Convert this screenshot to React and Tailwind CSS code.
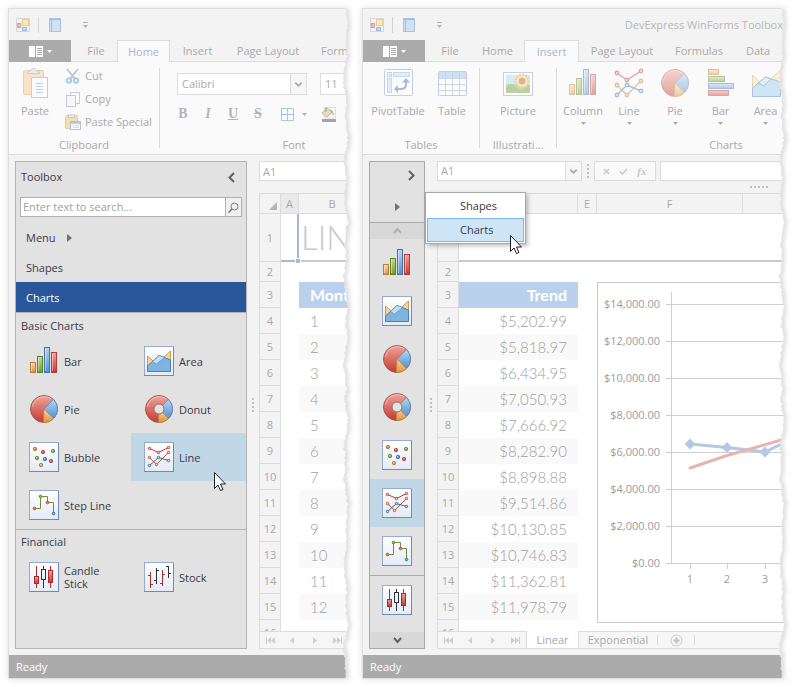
import { ChevronDown } from 'lucide-react';

const BASIC_CHARTS = [
  { name: 'Bar', icon: BarIcon },
  { name: 'Area', icon: AreaIcon },
  { name: 'Pie', icon: PieIcon },
  { name: 'Donut', icon: DonutIcon },
  { name: 'Bubble', icon: BubbleIcon },
  { name: 'Line', icon: LineIcon, hot: true },
  { name: 'Step Line', icon: StepIcon },
];

const FINANCIAL_CHARTS = [
  { name: 'Candle Stick', icon: CandleIcon },
  { name: 'Stock', icon: StockIcon },
];

const TREND = [
  '$5,202.99', '$5,818.97', '$6,434.95', '$7,050.93', '$7,666.92', '$8,282.90',
  '$8,898.88', '$9,514.86', '$10,130.85', '$10,746.83', '$11,362.81', '$11,978.79',
];

const TABS = [
  { name: 'File', width: 'w-[42px]' },
  { name: 'Home', width: 'w-[53px]' },
  { name: 'Insert', width: 'w-[55px]' },
  { name: 'Page Layout', width: 'w-[86px]' },
  { name: 'Formulas', width: 'w-[68px]' },
  { name: 'Data', width: 'w-[50px]' },
];

/* ---------- icons ---------- */

function Gradients() {
  const list = [
    ['gRed', '#f0a49c', '#c43a2e'],
    ['gBlue', '#b4d8f4', '#4d92d0'],
    ['gOrange', '#fbd9a8', '#e0903a'],
    ['gGreen', '#c6dc8c', '#6f9c2a'],
    ['gFrame', '#ffffff', '#e4ebf6'],
  ];
  return (
    <svg className="absolute h-0 w-0" aria-hidden="true">
      <defs>
        {list.map(([id, a, b]) => (
          <linearGradient key={id} id={id} x1="0" y1="0" x2="0" y2="1">
            <stop offset="0" stopColor={a} />
            <stop offset="1" stopColor={b} />
          </linearGradient>
        ))}
      </defs>
    </svg>
  );
}

function Icon({ children, frame }) {
  return (
    <svg width="30" height="30" viewBox="0 0 30 30" fill="none" className="shrink-0" aria-hidden="true">
      {frame && (
        <>
          <rect x="0.5" y="0.5" width="29" height="29" fill="url(#gFrame)" stroke="#98a9d2" />
          <path d="M0 29.5H30M29.5 1V30" stroke="#7387b8" />
        </>
      )}
      {children}
    </svg>
  );
}

function Bars() {
  return (
    <>
      <rect x="1.5" y="16.5" width="5" height="10" fill="url(#gOrange)" stroke="#c07a34" />
      <rect x="8.5" y="10.5" width="5" height="16" fill="url(#gGreen)" stroke="#5d8426" />
      <rect x="15.5" y="1.5" width="5" height="25" fill="url(#gBlue)" stroke="#4470b0" />
      <rect x="22.5" y="6.5" width="5" height="20" fill="url(#gRed)" stroke="#b83a3a" />
      <path d="M2.5 17.5V25M9.5 11.5V25M16.5 2.5V25M23.5 7.5V25" stroke="#fff" strokeOpacity="0.45" />
    </>
  );
}

function BarIcon() {
  return <Icon><Bars /></Icon>;
}

function AreaShape() {
  return (
    <>
      <path d="M3.5 10L12.5 18L26.5 5V25.5H3.5Z" fill="#f8d29a" stroke="#cf9a52" />
      <path d="M3.5 20L15 9.5L26.5 14V25.5H3.5Z" fill="#7fb4e0" stroke="#4b7fbd" />
      <path d="M8.5 15.5L15 9.5L20.5 11.5L12.5 18Z" fill="#c3dff5" stroke="#5a8fca" strokeWidth="0.7" />
    </>
  );
}

function AreaIcon() {
  return <Icon frame><AreaShape /></Icon>;
}

function PieShape() {
  return (
    <>
      <circle cx="15" cy="15" r="13.5" fill="url(#gRed)" stroke="#a8564e" />
      <path d="M15 15L24.5 5.4A13.5 13.5 0 0 1 24.5 24.6Z" fill="url(#gBlue)" stroke="#5a86b8" strokeWidth="0.8" />
      <path d="M15 15L24.5 24.6A13.5 13.5 0 0 1 14.5 28.5Z" fill="url(#gOrange)" stroke="#b98a4a" strokeWidth="0.8" />
      <path d="M3.5 13A12 12 0 0 1 22.5 5" stroke="#fff" strokeOpacity="0.4" />
    </>
  );
}

function PieIcon() {
  return <Icon><PieShape /></Icon>;
}

function DonutIcon() {
  return (
    <Icon>
      <PieShape />
      <circle cx="15" cy="15" r="5" fill="#e2e2e2" stroke="#94706e" />
    </Icon>
  );
}

function BubbleIcon() {
  const dots = [
    [6, 7, '#d9914c', '#a8602a'], [14, 10, '#d9605a', '#a83232'], [24, 9, '#8fb455', '#54782a'],
    [8, 16, '#8fb455', '#54782a'], [16, 17, '#5c98dc', '#2f60a4'], [22, 19, '#d9605a', '#a83232'],
    [12, 23, '#e6a45c', '#b06a2a'],
  ];
  return (
    <Icon frame>
      {dots.map(([x, y, fill, stroke]) => (
        <g key={`${x}-${y}`}>
          <circle cx={x} cy={y} r="1.7" fill={fill} stroke={stroke} strokeWidth="0.8" />
          <circle cx={x - 0.5} cy={y - 0.5} r="0.6" fill="#fff" fillOpacity="0.7" />
        </g>
      ))}
    </Icon>
  );
}

function Series({ points, color, r = 1.2, width = 1 }) {
  return (
    <g stroke={color} strokeWidth={width}>
      <polyline points={points.map((p) => p.join(',')).join(' ')} />
      {points.map(([x, y]) => <circle key={x} cx={x} cy={y} r={r} fill="#f4d9d4" />)}
    </g>
  );
}

function LineIcon() {
  return (
    <Icon frame>
      <Series points={[[5.5, 6.5], [14.5, 10.5], [24.5, 5.5]]} color="#c4393b" />
      <Series points={[[5.5, 15.5], [12.5, 22.5], [24.5, 10.5]]} color="#b5562f" />
      <Series points={[[5.5, 23.5], [14.5, 15.5], [24.5, 18.5]]} color="#3467b8" />
    </Icon>
  );
}

function StepIcon() {
  return (
    <Icon frame>
      <path d="M5.5 18.5H11.5V6.5H18.5V12.5H24.5V23.5" stroke="#6d9138" />
      <circle cx="5.5" cy="18.5" r="1.3" fill="#e08a6a" stroke="#b5502f" />
      <circle cx="11.5" cy="6.5" r="1.3" fill="#a6c470" stroke="#5b8029" />
      <circle cx="18.5" cy="12.5" r="1.3" fill="#f08a80" stroke="#c4393b" />
      <circle cx="24.5" cy="23.5" r="1.3" fill="#8ab4e6" stroke="#3467b8" />
    </Icon>
  );
}

function CandleIcon() {
  return (
    <Icon frame>
      <path d="M7.5 4V26M21.5 4V26" stroke="#b3282d" />
      <path d="M14.5 4V26" stroke="#2c3140" />
      <rect x="5.5" y="14.5" width="4" height="7" fill="url(#gRed)" stroke="#b3282d" />
      <rect x="12.5" y="7.5" width="4" height="10" fill="#eef2f9" stroke="#2c3140" />
      <rect x="19.5" y="8.5" width="4" height="12" fill="url(#gRed)" stroke="#b3282d" />
    </Icon>
  );
}

function StockIcon() {
  return (
    <Icon frame>
      <path d="M6.5 10V26M4 13.5H6.5M6.5 22.5H9M18.5 8V24M16 21.5H18.5M18.5 12.5H21" stroke="#b3282d" />
      <path d="M12.5 6V22M10 18.5H12.5M12.5 8.5H15M24.5 4V16M22 4.5H24.5M24.5 11.5H27" stroke="#2c3140" />
    </Icon>
  );
}

function LineLargeIcon() {
  return (
    <Icon>
      <Series points={[[3, 5], [13, 12], [27, 3]]} color="#c4393b" r={1.7} width={1.4} />
      <Series points={[[3, 17], [13, 27], [27, 13]]} color="#cc7a30" r={1.7} width={1.4} />
      <Series points={[[3, 27], [13, 17], [27, 23]]} color="#3a78c8" r={1.7} width={1.4} />
    </Icon>
  );
}

function HBarIcon() {
  return (
    <Icon>
      <rect x="2.5" y="1.5" width="10" height="5" fill="url(#gOrange)" stroke="#c07a34" />
      <rect x="2.5" y="8.5" width="16" height="5" fill="url(#gGreen)" stroke="#5d8426" />
      <rect x="2.5" y="15.5" width="25" height="5" fill="url(#gBlue)" stroke="#4470b0" />
      <rect x="2.5" y="22.5" width="20" height="5" fill="url(#gRed)" stroke="#b83a3a" />
    </Icon>
  );
}

function AreaLargeIcon() {
  return (
    <Icon>
      <path d="M1.5 7L12.5 18L29.5 2V28.5H1.5Z" fill="#fae0a8" stroke="#d9a85a" />
      <path d="M1.5 20L14.5 9L29.5 14V28.5H1.5Z" fill="#9accf0" stroke="#4b7fbd" />
      <path d="M7.5 15L14.5 9L20 11L12.5 18Z" fill="#c9e3f7" stroke="#4b7fbd" />
    </Icon>
  );
}

function PivotIcon() {
  return (
    <Icon>
      <rect x="1.5" y="1.5" width="28" height="26" rx="1" fill="#fff" stroke="#7f96cc" />
      <rect x="4.5" y="4.5" width="4" height="4" fill="#bfe0f6" stroke="#7fb4dc" />
      <rect x="10.5" y="4.5" width="16" height="4" fill="#bfe0f6" stroke="#7fb4dc" />
      <rect x="4.5" y="10.5" width="4" height="14" fill="#bfe0f6" stroke="#7fb4dc" />
      <path d="M13 21H18Q23 21 23 16V14" stroke="#4470b8" strokeWidth="2" />
      <path d="M11 21L15 17V25ZM23 10L27 14.5H19Z" fill="#4470b8" />
    </Icon>
  );
}

function TableIcon() {
  return (
    <Icon>
      <rect x="1.5" y="3.5" width="28" height="24" rx="1" fill="#fff" stroke="#7f96cc" />
      <rect x="2" y="4" width="27" height="6" fill="#8fc4ea" />
      <path d="M2 10.5H29M2 16.5H29M2 22.5H29M8.5 4V27M15.5 4V27M22.5 4V27" stroke="#9aa8d4" />
    </Icon>
  );
}

function PictureIcon() {
  return (
    <Icon>
      <rect x="0.5" y="4.5" width="29" height="23" fill="#fff" stroke="#8c9ccc" />
      <rect x="3" y="7" width="24" height="9" fill="#a8dcf4" />
      <rect x="3" y="16" width="24" height="9" fill="#90b848" />
      <path d="M3 19Q8 13 13 19T22 20L27 17V25H3Z" fill="#6f9c3a" />
      <circle cx="19" cy="13" r="6.5" fill="#f6cf6a" stroke="#dd9a3c" strokeWidth="2" strokeDasharray="2 1" />
      <circle cx="19" cy="13" r="3.2" fill="#a8602c" />
    </Icon>
  );
}

function PasteIcon() {
  return (
    <Icon>
      <rect x="3.5" y="2.5" width="20" height="24" rx="1.5" fill="#f6c98c" stroke="#dba060" />
      <path d="M7.5 5.5Q7 3.5 10 3Q11 0.5 13.5 0.5T17 3Q20 3.5 19.5 5.5Z" fill="#d6dcf0" stroke="#7f8fc4" />
      <rect x="11.5" y="9.5" width="16" height="20" fill="#f8faff" stroke="#7f96d8" />
      <path d="M16 15.5H23M16 18.5H23M16 21.5H23M16 24.5H23" stroke="#7f96d8" />
    </Icon>
  );
}

function CutIcon() {
  return (
    <svg width="16" height="16" viewBox="0 0 16 16" fill="none" aria-hidden="true">
      <path d="M2 1L10 11M13 1L5 11" stroke="#8a94b4" strokeWidth="2" />
      <circle cx="4" cy="12.5" r="2.3" fill="#d6ebfa" stroke="#4f94d8" strokeWidth="1.6" />
      <circle cx="11" cy="12.5" r="2.3" fill="#d6ebfa" stroke="#4f94d8" strokeWidth="1.6" />
    </svg>
  );
}

function CopyIcon() {
  return (
    <svg width="16" height="16" viewBox="0 0 16 16" fill="none" aria-hidden="true">
      <rect x="5.5" y="1.5" width="9" height="11" fill="#fff" stroke="#8a9ad4" />
      <rect x="1.5" y="4.5" width="9" height="11" fill="#f4f8ff" stroke="#8a9ad4" />
    </svg>
  );
}

function PasteSpecialIcon() {
  return (
    <svg width="16" height="16" viewBox="0 0 16 16" fill="none" aria-hidden="true">
      <rect x="0.5" y="1.5" width="12" height="13" rx="1" fill="#f6c65c" stroke="#d89a3c" />
      <path d="M3.5 3.5V1H9.5V3.5Z" fill="#eee" stroke="#8c8c9c" />
      <rect x="5.5" y="7.5" width="10" height="8" fill="#fff" stroke="#5c8cd0" />
      <path d="M6 9H15" stroke="#5ca4e4" strokeWidth="2" />
      <path d="M8 11.5H14M8 13.5H14" stroke="#b4bcd8" />
    </svg>
  );
}

function Chevron({ d, className }) {
  return (
    <svg width="9" height="11" viewBox="0 0 9 11" fill="none" className={className} aria-hidden="true">
      <path d={d} stroke="currentColor" strokeWidth="2" />
    </svg>
  );
}

function Caret({ className = '' }) {
  return (
    <svg width="5" height="3" viewBox="0 0 5 3" className={className} aria-hidden="true">
      <path d="M0 0H5L2.5 3Z" fill="currentColor" />
    </svg>
  );
}

function RightCaret() {
  return (
    <svg width="5" height="8" viewBox="0 0 5 8" aria-hidden="true">
      <path d="M0 0L5 4L0 8Z" fill="#707070" />
    </svg>
  );
}

function Cursor({ className }) {
  return (
    <svg width="13" height="20" viewBox="0 0 13 20" className={className} aria-hidden="true">
      <path d="M0.5 0.5V16.5L4 13L6.5 18.5L9 17.5L6.5 12H11.5Z" fill="#fff" stroke="#1c2030" />
    </svg>
  );
}

/* ---------- window chrome ---------- */

const TORN = Array.from({ length: 337 }, (_, i) => {
  const noise = Math.abs(Math.sin(i * 127.1) * 43758.5) % 1;
  const x = 4 + Math.sin(i * 0.13) * 1.2 + Math.sin(i * 0.31) * 0.9 + (noise - 0.5) * 2.4;
  return `${x.toFixed(1)} ${i * 2}`;
}).join('L');

function TornEdge({ id }) {
  return (
    <svg
      className="pointer-events-none absolute inset-y-0 -right-[7px] z-20 h-full w-[15px]"
      viewBox="0 0 15 671"
      preserveAspectRatio="none"
      fill="none"
      aria-hidden="true"
    >
      <defs>
        <clipPath id={id}><path d={`M${TORN}L15 672V0Z`} /></clipPath>
        <filter id={`${id}-soft`} x="-100%" width="300%"><feGaussianBlur stdDeviation="2" /></filter>
      </defs>
      <g clipPath={`url(#${id})`}>
        <rect width="15" height="671" fill="#fff" />
        <path d={`M${TORN}`} stroke="#000" strokeOpacity="0.14" strokeWidth="5" filter={`url(#${id}-soft)`} />
      </g>
      <path d={`M${TORN}`} stroke="#e4e4e4" />
    </svg>
  );
}

function TitleBar({ title }) {
  return (
    <header className="flex h-[31px] items-center bg-[#f3f3f3] pl-[7px]">
      <svg width="14" height="14" viewBox="0 0 14 14" fill="none" className="shrink-0 opacity-50" aria-hidden="true">
        <path d="M0.5 0.5H13.5V13.5H0.5Z" stroke="#bbb" />
        <rect x="6.5" y="1.5" width="6" height="6" fill="#fbe08a" stroke="#d8a83c" />
        <rect x="1.5" y="5.5" width="3" height="4" fill="#f08a78" stroke="#c84c3c" />
        <rect x="6.5" y="9.5" width="4" height="3" fill="#8cc0f0" stroke="#4c8cd0" />
      </svg>
      <span className="ml-2 h-4 w-px bg-[#d4d4d4]" />
      <svg width="12" height="14" viewBox="0 0 12 14" fill="none" className="ml-[10px] shrink-0 opacity-50" aria-hidden="true">
        <rect x="0.5" y="0.5" width="11" height="13" fill="#a8d4f4" stroke="#6c94c8" />
        <path d="M2.5 0V14M1 1.5H11" stroke="#5c84b8" />
      </svg>
      <svg width="5" height="6" viewBox="0 0 5 6" className="ml-[22px] shrink-0 text-[#b4b4b4]" aria-hidden="true">
        <path d="M0 0H5V1H0ZM0 3H5L2.5 6Z" fill="currentColor" />
      </svg>
      <h1 className="ml-auto whitespace-nowrap pr-[2px] text-[#b8b8b8]">{title}</h1>
    </header>
  );
}

function TabStrip({ active, tabs }) {
  return (
    <nav className="flex h-[22px] bg-[#f3f3f3]">
      <button aria-label="Application menu" className="flex w-[62px] shrink-0 items-center justify-center gap-1 bg-[#ababab] text-white">
        <svg width="14" height="11" viewBox="0 0 14 11" aria-hidden="true">
          <path d="M0 0H6V11H0ZM7 0H14V11H7Z" fill="#fff" />
          <path d="M8 2.5H13M8 4.5H13M8 6.5H13M8 8.5H13" stroke="#ababab" />
        </svg>
        <Caret />
      </button>
      <span className="w-1 shrink-0 border-b border-[#dcdcdc]" />
      {tabs.map((tab) => (
        <button
          key={tab.name}
          className={`${tab.width} shrink-0 whitespace-nowrap border-[#dcdcdc] text-center ${
            tab.name === active ? 'border-x border-t bg-[#fafafa] text-[#a4b8d8]' : 'border-b pt-px'
          }`}
        >
          {tab.name}
        </button>
      ))}
      <span className="flex-1 border-b border-[#dcdcdc]" />
    </nav>
  );
}

function RibbonGroup({ label, width, children }) {
  return (
    <section className={`${width} flex shrink-0 flex-col`}>
      <div className="h-[69px]">{children}</div>
      <p className="text-center leading-4">{label}</p>
    </section>
  );
}

function RibbonDivider() {
  return <span className="h-20 w-px shrink-0 bg-[#dcdcdc]" />;
}

function BigButton({ icon, label, width, caret }) {
  return (
    <button className={`${width} flex flex-col items-center gap-[5px]`}>
      <span className="opacity-45">{icon}</span>
      <span className="leading-4">{label}</span>
      {caret && <Caret className="-mt-[2px] shrink-0" />}
    </button>
  );
}

function HomeRibbon() {
  return (
    <>
      <RibbonGroup label="Clipboard" width="w-[150px]">
        <div className="flex">
          <BigButton icon={<PasteIcon />} label="Paste" width="w-[52px]" />
          <div className="flex flex-col pl-1">
            {[[CutIcon, 'Cut'], [CopyIcon, 'Copy'], [PasteSpecialIcon, 'Paste Special']].map(([Glyph, label]) => (
              <button key={label} className="flex h-[23px] items-start gap-1 whitespace-nowrap leading-4">
                <span className="opacity-50"><Glyph /></span>
                {label}
              </button>
            ))}
          </div>
        </div>
      </RibbonGroup>
      <RibbonDivider />
      <RibbonGroup label="Font" width="w-[268px]">
        <div className="flex gap-[13px] pl-[17px] pt-[5px]">
          <div className="relative flex h-[22px] w-[130px] border border-[#dcdcdc] bg-white">
            <select aria-label="Font name" className="w-full appearance-none pl-1 outline-none">
              <option>Calibri</option>
            </select>
            <span className="pointer-events-none absolute inset-y-0 right-0 flex w-4 items-center justify-center border-l border-[#dcdcdc] bg-[#f6f6f6]">
              <ChevronDown size={11} strokeWidth={4} />
            </span>
          </div>
          <select aria-label="Font size" className="h-[22px] w-[60px] appearance-none border border-[#dcdcdc] bg-white pl-1 outline-none">
            <option>11</option>
          </select>
        </div>
        <div className="flex items-center pl-[17px] pt-[9px] font-['Liberation_Serif'] text-[14px] font-bold leading-5 text-[#b0b4be]">
          <button className="w-[12px]">B</button>
          <button className="ml-[13px] w-[12px] italic">I</button>
          <button className="ml-[13px] w-[12px] underline">U</button>
          <button className="ml-[13px] w-[12px] line-through">S</button>
          <button aria-label="Borders" className="ml-[17px] flex items-center gap-2">
            <svg width="13" height="13" viewBox="0 0 13 13" fill="none" aria-hidden="true">
              <path d="M0.5 0.5H12.5V12.5H0.5ZM6.5 0V13M0 6.5H13" stroke="#a4c4e8" />
            </svg>
            <Caret />
          </button>
          <button aria-label="Fill color" className="ml-[14px] flex items-center gap-2">
            <svg width="16" height="16" viewBox="0 0 16 16" fill="none" className="opacity-60" aria-hidden="true">
              <path d="M3.5 1.5H14.5V12H3.5Z" stroke="#c4cce4" />
              <path d="M1 7L6 2L11 6L6 11Z" fill="#f0c890" stroke="#b07c48" />
              <path d="M5 1V6M9 4Q12 5 12 9" stroke="#6ca04c" strokeWidth="1.5" />
              <path d="M1 13H15V16H1Z" fill="#6a6a6a" />
            </svg>
            <Caret />
          </button>
        </div>
      </RibbonGroup>
    </>
  );
}

function InsertRibbon() {
  return (
    <>
      <RibbonGroup label="Tables" width="w-[116px]">
        <div className="flex pl-[7px]">
          <BigButton icon={<PivotIcon />} label="PivotTable" width="w-[56px]" />
          <BigButton icon={<TableIcon />} label="Table" width="w-[52px]" />
        </div>
      </RibbonGroup>
      <RibbonDivider />
      <RibbonGroup label="Illustrati…" width="w-[76px]">
        <BigButton icon={<PictureIcon />} label="Picture" width="w-full" />
      </RibbonGroup>
      <RibbonDivider />
      <RibbonGroup label="Charts" width="w-[338px]">
        <div className="flex pl-[3px]">
          <BigButton icon={<BarIcon />} label="Column" width="w-[46px]" caret />
          <BigButton icon={<LineLargeIcon />} label="Line" width="w-[46px]" caret />
          <BigButton icon={<PieIcon />} label="Pie" width="w-[46px]" caret />
          <BigButton icon={<HBarIcon />} label="Bar" width="w-[45px]" caret />
          <BigButton icon={<AreaLargeIcon />} label="Area" width="w-[45px]" caret />
        </div>
      </RibbonGroup>
    </>
  );
}

function Window({ id, title, active, tabs, grow, ribbon, children }) {
  return (
    <div className={`${grow} relative min-w-0 shadow-[0_0_7px_rgba(0,0,0,0.13)]`}>
      <div className="flex h-full flex-col overflow-hidden border border-[#dedede] bg-[#f3f3f3]">
        <TitleBar title={title} />
        <TabStrip active={active} tabs={tabs} />
        <div className="flex h-[93px] border-b border-[#dcdcdc] bg-[#fafafa] pt-[6px]">{ribbon}</div>
        <div className="flex flex-1 py-[6px] pl-[6px]">{children}</div>
        <footer className="h-[23px] bg-[#ababab] pl-[7px] text-[11px] leading-[23px] text-white">Ready</footer>
      </div>
      <TornEdge id={id} />
    </div>
  );
}

function Grip() {
  return (
    <div className="flex w-3 shrink-0 flex-col items-center justify-center gap-[2px]">
      {[0, 1, 2, 3].map((i) => <span key={i} className="size-[2px] bg-[#c0c0c0]" />)}
    </div>
  );
}

/* ---------- toolbox ---------- */

function ToolItem({ item }) {
  const Glyph = item.icon;
  return (
    <button className={`relative flex h-12 items-center gap-[5px] pl-[13px] text-left ${item.hot ? 'bg-[#c0d7e5]' : ''}`}>
      <Glyph />
      <span className="max-w-[48px] leading-[13px]">{item.name}</span>
      {item.hot && <Cursor className="absolute left-[83px] top-[39px] z-10" />}
    </button>
  );
}

function Toolbox() {
  return (
    <aside className="flex w-[232px] shrink-0 flex-col border border-[#b4b4b4] bg-[#e2e2e2] text-[#3a3a44]">
      <div className="flex h-[30px] items-center justify-between pl-[5px] pr-[10px]">
        <h2>Toolbox</h2>
        <button aria-label="Collapse" className="text-[#606060]"><Chevron d="M7 1L2.5 5.5L7 10" /></button>
      </div>
      <div className="mx-1 mt-[5px] flex h-5 border border-[#b0b0b0] bg-white">
        <input aria-label="Search" placeholder="Enter text to search..." className="min-w-0 flex-1 pl-[2px] outline-none placeholder:text-[#a0a0a0]" />
        <button aria-label="Find" className="flex w-4 items-center justify-center border-l border-[#b0b0b0] bg-[#f0f0f0]">
          <svg width="11" height="11" viewBox="0 0 11 11" fill="none" aria-hidden="true">
            <circle cx="6.5" cy="4.5" r="3.5" stroke="#808080" />
            <path d="M4 7L0.5 10.5" stroke="#707070" strokeWidth="1.5" />
          </svg>
        </button>
      </div>
      <div className="mt-[5px] flex flex-col text-left">
        <button className="flex h-[30px] items-center gap-[11px] pl-[10px] pt-px">Menu <RightCaret /></button>
        <button className="h-[30px] pl-[10px] pt-px text-left">Shapes</button>
        <button className="h-[30px] bg-[#2a579a] pl-[10px] pt-px text-left text-white">Charts</button>
      </div>
      <section className="border-t border-[#b4b4b4]">
        <h3 className="h-6 pl-[5px] pt-[3px] leading-5">Basic Charts</h3>
        <div className="grid grid-cols-2">
          {BASIC_CHARTS.map((item) => <ToolItem key={item.name} item={item} />)}
        </div>
      </section>
      <section className="border-t border-[#b4b4b4]">
        <h3 className="h-[23px] pl-[5px] pt-[2px] leading-5">Financial</h3>
        <div className="grid grid-cols-2">
          {FINANCIAL_CHARTS.map((item) => <ToolItem key={item.name} item={item} />)}
        </div>
      </section>
    </aside>
  );
}

function CollapsedToolbox() {
  return (
    <aside className="relative z-10 flex w-14 shrink-0 flex-col border border-[#a9a9a9] bg-[#e2e2e2] text-[#3a3a44]">
      <div className="flex h-[61px] flex-col items-center border-b border-[#a9a9a9]">
        <button aria-label="Expand" className="mr-2 mt-2 self-end text-[#606060]"><Chevron d="M2 1L6.5 5.5L2 10" /></button>
        <button aria-label="Menu" className="mt-[22px]"><RightCaret /></button>
      </div>
      <button aria-label="Scroll up" className="flex h-4 items-center justify-center bg-[#d8d8d8] text-[#b0b0b0]">
        <Chevron d="M1 7L4.5 3L8 7" />
      </button>
      {BASIC_CHARTS.map(({ name, icon: Glyph, hot }) => (
        <button key={name} aria-label={name} className={`flex h-12 items-center justify-center ${hot ? 'bg-[#c0d7e5]' : ''}`}>
          <Glyph />
        </button>
      ))}
      <button aria-label="Candle Stick" className="flex h-[49px] items-center justify-center border-t border-[#a9a9a9]"><CandleIcon /></button>
      <button aria-label="Scroll down" className="mt-auto flex h-4 items-center justify-center bg-[#d8d8d8] text-[#606060]">
        <Chevron d="M1 3L4.5 7L8 3" />
      </button>

      <div className="absolute left-full top-[30px] ml-px flex w-[101px] flex-col border border-[#a9a9a9] bg-white p-px shadow-[2px_2px_4px_rgba(0,0,0,0.25)]">
        <button className="h-6 pl-[33px] text-left">Shapes</button>
        <button className="relative h-6 border border-[#7eb4ea] bg-[#cde5f7] pl-8 text-left">
          Charts
          <Cursor className="absolute left-[82px] top-4" />
        </button>
      </div>
    </aside>
  );
}

/* ---------- sheet ---------- */

function NavButtons() {
  const glyphs = [
    ['First', 'M0 0H1V7H0ZM5 0V7L1 3.5ZM9 0V7L5 3.5Z'],
    ['Previous', 'M6 0V7L2 3.5Z'],
    ['Next', 'M3 0V7L7 3.5Z'],
    ['Last', 'M9 0H10V7H9ZM1 0V7L5 3.5ZM5 0V7L9 3.5Z'],
  ];
  return (
    <div className="flex w-[89px] shrink-0 border-r border-[#dcdcdc]">
      {glyphs.map(([label, d]) => (
        <button key={label} aria-label={`${label} sheet`} className="flex w-[22px] items-center justify-center">
          <svg width="10" height="7" viewBox="0 0 10 7" aria-hidden="true"><path d={d} fill="#d0d0d0" /></svg>
        </button>
      ))}
    </div>
  );
}

const CORNER = (
  <svg width="8" height="8" viewBox="0 0 8 8" className="ml-auto mr-[3px] mt-1" aria-hidden="true">
    <path d="M8 0V8H0Z" fill="#b4b4b4" />
  </svg>
);

const COL_HEAD = 'border-b border-r border-[#dcdcdc] font-normal text-[#a9a9a9]';
const ROW_HEAD = 'border-b border-x border-[#dcdcdc] bg-[#f3f3f3] font-normal text-[#a9a9a9]';
const VALUE = "font-['Lato'] text-[15px] font-light text-[#a0a0a0]";

function MonthSheet() {
  return (
    <div className="flex min-w-0 flex-1 flex-col">
      <input aria-label="Name box" defaultValue="A1" className="h-5 w-full border border-[#dcdcdc] bg-white pl-[3px] outline-none" />
      <div className="mt-3 h-[438px] overflow-hidden bg-white">
        <table className="w-[240px] table-fixed border-separate border-spacing-0">
          <thead>
            <tr className="h-[21px] bg-[#f3f3f3]">
              <th className={`w-[22px] border-l border-t ${COL_HEAD}`}>{CORNER}</th>
              <th className={`w-[18px] border-t bg-[#e9e9e9] ${COL_HEAD}`}>A</th>
              <th className={`w-[67px] border-t ${COL_HEAD}`}>B</th>
              <th className={`border-t ${COL_HEAD}`} />
            </tr>
          </thead>
          <tbody>
            <tr className="h-12">
              <th className={`${ROW_HEAD} bg-[#e9e9e9]`}>1</th>
              <td className="relative border-b-2 border-r-2 border-[#a4b8d8]">
                <span className="absolute -bottom-1 -right-1 size-[6px] border border-white bg-[#a4b8d8]" />
              </td>
              <td colSpan="2" className="border-b-2 border-[#cacaca] pl-[2px] font-['Lato'] text-[33px] font-light leading-9 text-[#c8c8c8]">LINEAR</td>
            </tr>
            <tr className="h-5"><th className={ROW_HEAD}>2</th><td colSpan="3" /></tr>
            <tr className="h-[26px]">
              <th className={ROW_HEAD}>3</th>
              <td />
              <td colSpan="2" className="bg-[#bad1ee] pl-[11px] text-left font-['Lato'] text-[16px] font-bold text-white">Month</td>
            </tr>
            {TREND.map((_, i) => (
              <tr key={i} className="h-[26px]">
                <th className={ROW_HEAD}>{i + 4}</th>
                <td />
                <td colSpan="2" className={`pl-[11px] ${VALUE} ${i % 2 ? 'bg-[#f9f9f9]' : ''}`}>{i + 1}</td>
              </tr>
            ))}
            <tr className="h-[26px]"><th className={ROW_HEAD}>16</th><td colSpan="3" /></tr>
          </tbody>
        </table>
      </div>
      <div className="flex h-[18px] border border-[#dcdcdc] bg-[#f6f6f6]"><NavButtons /></div>
    </div>
  );
}

function TrendChart() {
  const labels = ['$14,000.00', '$12,000.00', '$10,000.00', '$8,000.00', '$6,000.00', '$4,000.00', '$2,000.00', '$0.00'];
  return (
    <svg width="240" height="341" viewBox="0 0 240 341" fill="none" className="block" role="img" aria-label="Trend chart">
      <rect x="0.5" y="0.5" width="239" height="340" fill="#fff" stroke="#cacaca" />
      {labels.map((label, i) => (
        <g key={label}>
          <path d={`M69 ${22.5 + i * 37}H240`} stroke="#cfcfcf" />
          <text x="63" y={26 + i * 37} textAnchor="end" fontSize="11" fill="#9c9c9c">{label}</text>
        </g>
      ))}
      <path d="M74.5 10V281" stroke="#cfcfcf" />
      {[93, 130, 168, 205].map((x, i) => (
        <g key={x}>
          <path d={`M${x + 0.5} 281V287`} stroke="#cfcfcf" />
          <text x={x} y="301" textAnchor="middle" fontSize="11" fill="#9c9c9c">{i + 1}</text>
        </g>
      ))}
      <path d="M93 162L130 165.5L168 170L205 152" stroke="#b5c9e4" strokeWidth="3" />
      <path d="M93 156.5L98.5 162L93 167.5L87.5 162ZM130 160L135.5 165.5L130 171L124.5 165.5ZM168 164.5L173.5 170L168 175.5L162.5 170Z" fill="#b5c9e4" />
      <path d="M93 186L130 173.5L188 157" stroke="#e6b5b2" strokeWidth="3" strokeLinecap="round" />
    </svg>
  );
}

function TrendSheet() {
  return (
    <div className="flex min-w-0 flex-1 flex-col">
      <div className="flex h-5">
        <div className="relative flex w-[145px] shrink-0 border border-[#dcdcdc] bg-white">
          <select aria-label="Name box" className="w-full appearance-none pl-[3px] outline-none">
            <option>A1</option>
          </select>
          <span className="pointer-events-none absolute inset-y-0 right-0 flex w-4 items-center justify-center border-l border-[#dcdcdc] bg-[#f6f6f6]">
            <ChevronDown size={11} strokeWidth={4} />
          </span>
        </div>
        <Grip />
        <div className="flex w-[62px] shrink-0 items-center justify-around border border-[#dcdcdc] bg-[#f9f9f9] px-1 text-[#c8c8c8]">
          <button aria-label="Cancel">
            <svg width="7" height="7" viewBox="0 0 7 7" aria-hidden="true"><path d="M1 1L6 6M6 1L1 6" stroke="currentColor" strokeWidth="1.5" /></svg>
          </button>
          <button aria-label="Enter">
            <svg width="9" height="7" viewBox="0 0 9 7" fill="none" aria-hidden="true"><path d="M1 3.5L3.5 6L8 1" stroke="currentColor" strokeWidth="1.5" /></svg>
          </button>
          <button className="font-['Liberation_Serif'] text-[11px] font-bold italic">fx</button>
        </div>
        <input aria-label="Formula" className="ml-1 w-full min-w-0 border border-[#dcdcdc] bg-white outline-none" />
      </div>
      <div className="flex h-3 items-center justify-end gap-[2px] pr-[17px]">
        {[0, 1, 2, 3, 4].map((i) => <span key={i} className="size-[2px] bg-[#c0c0c0]" />)}
      </div>
      <div className="h-[438px] overflow-hidden bg-white">
        <table className="w-[405px] table-fixed border-separate border-spacing-0">
          <thead>
            <tr className="h-[21px] bg-[#f3f3f3]">
              <th className={`w-[22px] border-l border-t ${COL_HEAD}`}>{CORNER}</th>
              <th className={`w-[119px] border-t ${COL_HEAD}`} />
              <th className={`w-[19px] border-t ${COL_HEAD}`}>E</th>
              <th className={`w-[146px] border-t ${COL_HEAD}`}>F</th>
              <th className={`border-t ${COL_HEAD}`} />
            </tr>
          </thead>
          <tbody>
            <tr className="h-12">
              <th className={`${ROW_HEAD} bg-[#e9e9e9]`} />
              <td colSpan="4" className="border-b-2 border-[#cacaca]" />
            </tr>
            <tr className="h-5"><th className={ROW_HEAD}>2</th><td colSpan="4" /></tr>
            <tr className="h-[26px]">
              <th className={ROW_HEAD}>3</th>
              <td className="bg-[#bad1ee] pr-[11px] text-right font-['Lato'] text-[16px] font-bold text-white">Trend</td>
              <td />
              <td colSpan="2" rowSpan="14" className="align-top"><TrendChart /></td>
            </tr>
            {TREND.map((value, i) => (
              <tr key={value} className="h-[26px]">
                <th className={ROW_HEAD}>{i + 4}</th>
                <td className={`pr-[11px] text-right ${VALUE} ${i % 2 ? 'bg-[#f9f9f9]' : ''}`}>{value}</td>
                <td />
              </tr>
            ))}
            <tr className="h-[26px]"><th className={ROW_HEAD}>16</th><td /><td /></tr>
          </tbody>
        </table>
      </div>
      <div className="flex h-[18px] items-stretch border border-[#dcdcdc] bg-[#f6f6f6]">
        <NavButtons />
        <button className="-mt-px w-[51px] shrink-0 bg-white">Linear</button>
        <button className="w-[79px] shrink-0 border-l border-[#dcdcdc]">Exponential</button>
        <span className="my-[3px] w-px bg-[#dcdcdc]" />
        <button aria-label="Add sheet" className="flex w-9 items-center justify-center">
          <svg width="13" height="13" viewBox="0 0 13 13" fill="none" aria-hidden="true">
            <circle cx="6.5" cy="6.5" r="5.5" stroke="#cacaca" />
            <path d="M6.5 3.5V9.5M3.5 6.5H9.5" stroke="#c0c0c0" strokeWidth="2" />
          </svg>
        </button>
        <span className="my-[3px] w-px bg-[#dcdcdc]" />
      </div>
    </div>
  );
}

export default function App() {
  return (
    <main className="flex min-h-screen gap-3 overflow-hidden bg-white py-2 pl-2 pr-[7px] font-['Open_Sans',sans-serif] text-[11px] leading-4 text-[#a9a9a9]">
      <Gradients />
      <Window id="tear-left" active="Home" tabs={TABS.slice(0, 5)} grow="flex-[342]" ribbon={<HomeRibbon />}>
        <Toolbox />
        <Grip />
        <MonthSheet />
      </Window>
      <Window id="tear-right" title="DevExpress WinForms Toolbox" active="Insert" tabs={TABS} grow="flex-[424]" ribbon={<InsertRibbon />}>
        <CollapsedToolbox />
        <Grip />
        <TrendSheet />
      </Window>
    </main>
  );
}
